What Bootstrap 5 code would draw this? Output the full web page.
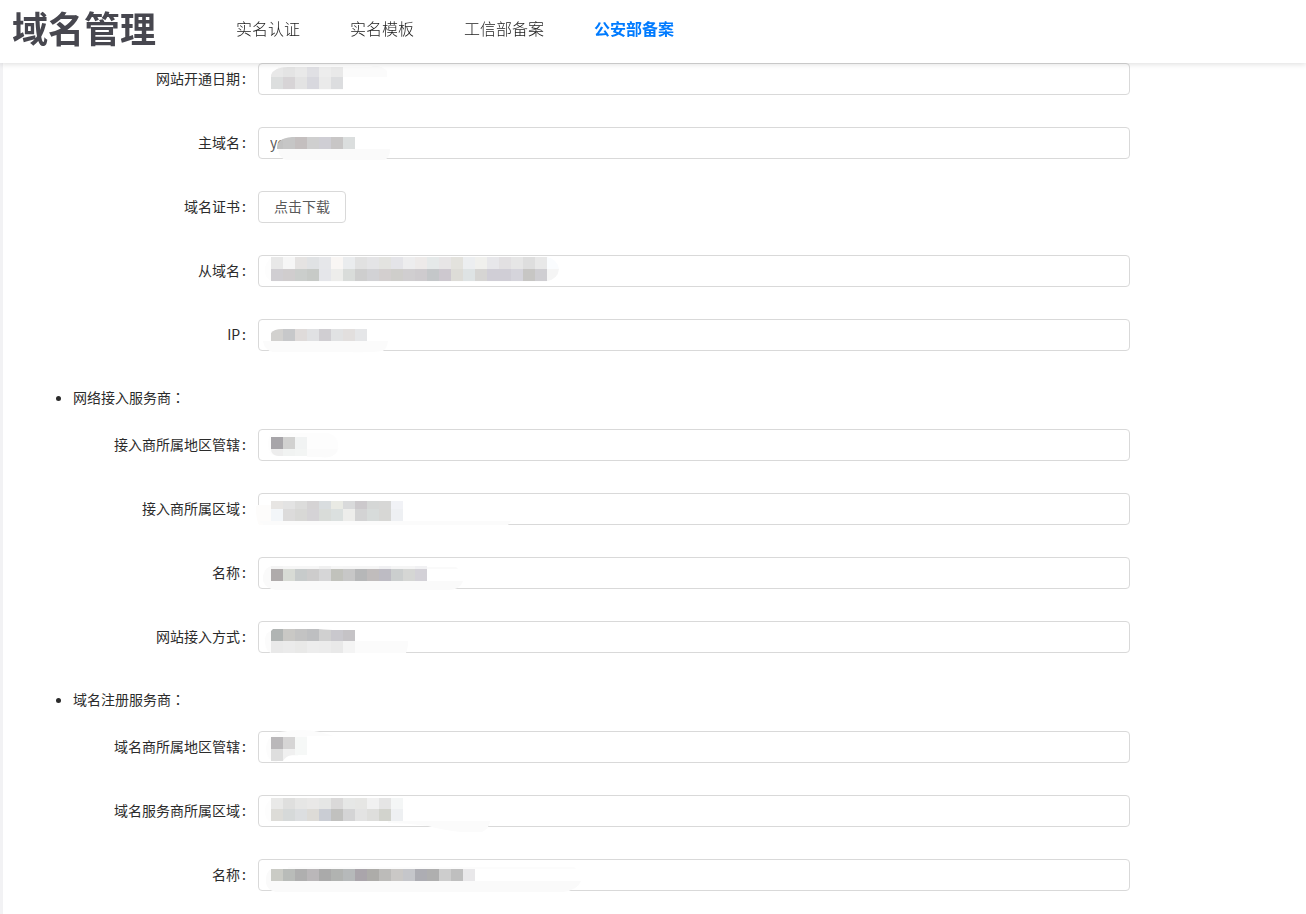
<!DOCTYPE html>
<html lang="zh-CN">
<head>
<meta charset="utf-8">
<meta name="viewport" content="width=device-width, initial-scale=1">
<title>域名管理</title>
<link rel="stylesheet" href="https://cdn.jsdelivr.net/npm/bootstrap@5.3.0/dist/css/bootstrap.min.css">
<style>
  body { font-family: "Noto Sans CJK SC", sans-serif; font-size: 14px; line-height: 20px; color: #2b2b2b; background: #fff; }
  .site-header { height: 63px; box-shadow: 0 1px 6px rgba(0, 0, 0, .14); }
  .site-logo { font-size: 36px; line-height: 54px; font-weight: 700; color: #47474f; margin: 0 80px 0 12px; }
  .site-logo:hover { color: #47474f; }
  .site-menu { gap: 50px; height: 56px; }
  .site-menu .nav-link { font-size: 16px; line-height: 24px; padding: 0; color: #1c1c1c; font-weight: 300; }
  .site-menu .nav-link.active { color: #007bff; font-weight: 700; }
  .page-body { padding: 63px 176px 0 37px; border-left: 3px solid #f2f2f4; min-height: 100vh; }
  .form-line { margin-bottom: 32px; }
  .form-line.last-line { margin-bottom: 0; }
  .line-label { width: 218px; padding: 0 12px 2px 0; }
  .line-label::after { content: ":"; margin-left: 2px; }
  .form-line .form-control { height: 32px; padding: 3px 11px 5px; font-size: 14px; line-height: 20px; color: #595959; border-color: #d9d9d9; border-radius: 4px; }
  .btn-download { height: 32px; padding: 3px 15px 5px; font-size: 14px; line-height: 20px; color: #595959; border: 1px solid #d9d9d9; border-radius: 4px; background: #fff; }
  .provider-list { padding-left: 33px; margin: 0; }
  .provider-title { line-height: 28px; margin-bottom: 18px; }
  .wide-colon { font-family: "Noto Sans CJK TC", sans-serif; }
  .provider-fields { margin-left: -33px; }
  .censor { position: absolute; left: 0; top: 0; width: 100%; height: 32px; overflow: visible; pointer-events: none; z-index: 6; }
</style>
</head>
<body>
<header class="site-header fixed-top bg-white d-flex align-items-start">
  <a class="site-logo text-decoration-none text-nowrap" href="#">域名管理</a>
  <nav class="site-menu nav flex-nowrap align-items-center text-nowrap">
    <a class="nav-link" href="#">实名认证</a>
    <a class="nav-link" href="#">实名模板</a>
    <a class="nav-link" href="#">工信部备案</a>
    <a class="nav-link active" aria-current="page" href="#">公安部备案</a>
  </nav>
</header>

<main class="page-body">
  <form>
    <div class="form-line d-flex align-items-center">
      <label class="line-label flex-shrink-0 text-end" for="openDate">网站开通日期</label>
      <div class="flex-fill position-relative"><input class="form-control" id="openDate" type="text"></div>
    </div>
    <div class="form-line d-flex align-items-center">
      <label class="line-label flex-shrink-0 text-end" for="mainDomain">主域名</label>
      <div class="flex-fill position-relative"><input class="form-control" id="mainDomain" type="text" value="yo"></div>
    </div>
    <div class="form-line d-flex align-items-center">
      <label class="line-label flex-shrink-0 text-end" for="certificate">域名证书</label>
      <button class="btn btn-download" id="certificate" type="button">点击下载</button>
    </div>
    <div class="form-line d-flex align-items-center">
      <label class="line-label flex-shrink-0 text-end" for="subDomain">从域名</label>
      <div class="flex-fill position-relative"><input class="form-control" id="subDomain" type="text"></div>
    </div>
    <div class="form-line d-flex align-items-center">
      <label class="line-label flex-shrink-0 text-end" for="ipAddress">IP</label>
      <div class="flex-fill position-relative"><input class="form-control" id="ipAddress" type="text"></div>
    </div>

    <ul class="provider-list">
      <li>
        <div class="provider-title">网络接入服务商<span class="wide-colon" lang="zh-TW">：</span></div>
        <div class="provider-fields">
          <div class="form-line d-flex align-items-center">
            <label class="line-label flex-shrink-0 text-end" for="accessRegion">接入商所属地区管辖</label>
            <div class="flex-fill position-relative"><input class="form-control" id="accessRegion" type="text"></div>
          </div>
          <div class="form-line d-flex align-items-center">
            <label class="line-label flex-shrink-0 text-end" for="accessArea">接入商所属区域</label>
            <div class="flex-fill position-relative"><input class="form-control" id="accessArea" type="text"></div>
          </div>
          <div class="form-line d-flex align-items-center">
            <label class="line-label flex-shrink-0 text-end" for="accessName">名称</label>
            <div class="flex-fill position-relative"><input class="form-control" id="accessName" type="text"></div>
          </div>
          <div class="form-line d-flex align-items-center">
            <label class="line-label flex-shrink-0 text-end" for="accessMode">网站接入方式</label>
            <div class="flex-fill position-relative"><input class="form-control" id="accessMode" type="text"></div>
          </div>
        </div>
      </li>
      <li>
        <div class="provider-title">域名注册服务商<span class="wide-colon" lang="zh-TW">：</span></div>
        <div class="provider-fields">
          <div class="form-line d-flex align-items-center">
            <label class="line-label flex-shrink-0 text-end" for="registrarRegion">域名商所属地区管辖</label>
            <div class="flex-fill position-relative"><input class="form-control" id="registrarRegion" type="text"></div>
          </div>
          <div class="form-line d-flex align-items-center">
            <label class="line-label flex-shrink-0 text-end" for="registrarArea">域名服务商所属区域</label>
            <div class="flex-fill position-relative"><input class="form-control" id="registrarArea" type="text"></div>
          </div>
          <div class="form-line last-line d-flex align-items-center">
            <label class="line-label flex-shrink-0 text-end" for="registrarName">名称</label>
            <div class="flex-fill position-relative"><input class="form-control" id="registrarName" type="text"></div>
          </div>
        </div>
      </li>
    </ul>
  </form>
</main>

<script src="https://cdn.jsdelivr.net/npm/bootstrap@5.3.0/dist/js/bootstrap.bundle.min.js"></script>
<script>
  // Pixelated masks over private values. smears: [path, colour]; rows: [y, height, colours of the 12px cells].
  // clip is an optional outline that rounds the brush ends.
  const masks = {
    openDate: {
      smears: [["M20 4H112Q122 1 129 8V14H85V27H20Z", "#fbfbfb"]],
      clip: "M13 30V12Q16 4 30 4H140V30Z",
      rows: [[4, 10, "e8e8e8 e4e4e4 e9e9e9 e0e0e4 ededed e9e9e9"], [14, 12, "dcdede d7d4d6 e3e3e3 d8d8de eaeaea dcdddf"]]
    },
    mainDomain: {
      smears: [["M20 22H132Q132 30 127 33H28Q21 31 20 22Z", "#fafafa"]],
      clip: "M19 22Q18 11 34 10H140V22Z",
      rows: [[10, 12, "c2c2c2 c6c6c6 c4bfbf cfcfcf cfced4 c8c6c6 dbdede"]]
    },
    subDomain: {
      smears: [["M13 3Q6 8 7 18Q8 24 15 27H289V3Z", "#fdfdfd"], ["M289 2Q299 4 301 14H289Z", "#fafcfe"], ["M289 14H301Q300 24 289 26Z", "#f5f5f5"]],
      rows: [[2, 12, "e8e8e8 f6f6f6 e5e3e2 e0e2e4 e6e7ea f9f6f4 eaecee e1e1e1 e4e4e6 e3e3e0 e4e4e8 ededee edeae9 e5e9e9 e7e5e6 e3e2dd eceef0 f0f0ed e7e7ea e2e0e2 e6e6e6 dedede e8e8e8"],
             [14, 12, "d0ced2 d0cdce cbcecc c7cac7 e5e6ea ededeb d9dcda cecece d2d2d5 d3cfcf cfcecb d0ced0 cecbce c4c7c9 cdc8cf dddcd7 dee3e4 d6d5d3 d0ced6 d0ced6 d5d4db c7c6c4 cfced2"]]
    },
    ipAddress: {
      smears: [["M5 22H130Q129 29 125 32Q110 34 90 33H15Q6 31 5 22Z", "#fbfbfb"]],
      clip: "M13 22V14Q16 10 24 10H120V22Z",
      rows: [[10, 12, "d2d1cf c7c8ca dfdbda e0e1e3 d0ced2 e1e2e3 e2dfde e5e6e8"]]
    },
    accessRegion: {
      smears: [["M18 4H70Q78 6 80 14Q82 24 72 28Q65 30 60 27H18Q10 26 10 14Q10 6 18 4Z", "#fdfdfd"], ["M49 20H80Q78 26 72 28H49Z", "#fbfbfb"]],
      clip: "M13 8H49V27H20Q13 26 13 20Z",
      rows: [[8, 12, "a7a5a9 d1d1d0 f1f3f3"], [20, 7, "ededed f1f3f2 f3f5f4"]]
    },
    accessArea: {
      smears: [["M-2 16Q-3 13 0 12H13V32H1Q-2 26 -2 16Z", "#fdfcfb"], ["M1 28H253L250 32H6Z", "#fbfbfb"]],
      rows: [[8, 8, "e7e5e3 e3e3e3 dcdcdb d5d3d4 d9dddf e9eae4 d9dadb ccc9cc d5d7d6 d7d7d6 f1f2f6"], [16, 12, "f3f6f9 dcdbdb d8d8d6 d5d3d6 d9dcd9 dbe0df ededeb d3d3d4 d7dbda d7d7d5 eef0f3"]]
    },
    accessName: {
      smears: [["M169 10H198L200 12H169Z", "#fafafa"], ["M13 9Q4 12 5 24Q8 32 18 33H190Q202 33 205 24H13Z", "#fafafa"]],
      rows: [[9, 3, "f4f4f4 f6f6f6 f6f6f6 f6f6f6 f0f0f0 f6f6f6 f5f5f5 f5f5f5 f5f5f5 f0f0f2 f5f5f5 f5f5f5 f1f1f3"], [12, 12, "afabab d8dbd5 c7cbcb cdcccc d6d6d7 c1c2bc c7c7c7 b6b7b8 c0bcbc bdbbc3 cbcece d5d6d4 d3d1d7"]]
    },
    accessMode: {
      smears: [["M13 10Q6 12 7 22Q8 30 13 32H148Q150 28 150 20H13Z", "#fbfbfb"]],
      clip: "M13 32V10L15 8H60Q72 9 78 9H97V32Z",
      rows: [[8, 12, "b0b4b3 c9c8c5 c3c3c3 bebfc1 d0d0d0 c9c8cd c5c3c6"], [20, 12, "e9e9e9 ebebeb e9e9e8 ededed ececec e9e9e9 f4f4f4"]]
    },
    registrarRegion: {
      smears: [["M22 1Q45 -3 62 1L76 5H49V18H40V25H30L18 31Q9 30 8 18Q8 6 22 1Z", "#fcfcfc"]],
      clip: "M13 6H49V24H34Q28 25 25 30H13Z",
      rows: [[6, 12, "bab8ba d6d5d5 f6f8f7"], [18, 12, "dedede f0f0f0 f6f8f7"]]
    },
    registrarArea: {
      smears: [["M13 4Q6 10 7 18Q8 26 13 27Z", "#fdfdfd"], ["M130 26H232Q231 34 224 37H203Q185 35 170 31Q150 28 130 28Z", "#fbfbfb"]],
      rows: [[3, 11, "e9e9e8 dfdfde e6e6e5 e9e8e7 e5e6e5 dad9d9 e6e7e6 e6e6e4 f1f1f1 e5e5e5 f4f6f6"], [14, 12, "dddcd8 d6d9d9 dcdee0 dddbd7 cacdd4 c1c1bf d4d4d5 e3e3e3 dededc d2d3cd eef0f2"]]
    },
    registrarName: {
      smears: [["M30 8H316L318 10H30Z", "#fcfcfc"], ["M13 10Q7 14 8 24Q9 31 18 33H305Q320 31 323 22H13Z", "#fafafa"]],
      rows: [[10, 12, "cacbc5 b9bcb9 afafaf bab7b9 aaaaaa b1b3b1 b6b9ba aaa5ab adaca9 bcbbb9 cac8c6 c5c6ca adadb3 afafaf cdcdcd bfbfbf e9e8ea"]]
    }
  };

  for (const [id, mask] of Object.entries(masks)) {
    const smears = mask.smears.map(([d, fill]) => `<path d="${d}" fill="${fill}"/>`).join("");
    const cells = mask.rows.map(([y, h, colours]) => colours.split(" ").map((c, i) =>
      `<rect x="${13 + i * 12}" y="${y}" width="12" height="${h}" fill="#${c}"/>`).join("")).join("");
    const clip = mask.clip ? `<clipPath id="${id}Clip"><path d="${mask.clip}"/></clipPath>` : "";
    const ref = mask.clip ? ` clip-path="url(#${id}Clip)"` : "";
    document.getElementById(id).insertAdjacentHTML("afterend",
      `<svg class="censor" aria-hidden="true">${clip}${smears}<g${ref}>${cells}</g></svg>`);
  }
</script>
</body>
</html>
